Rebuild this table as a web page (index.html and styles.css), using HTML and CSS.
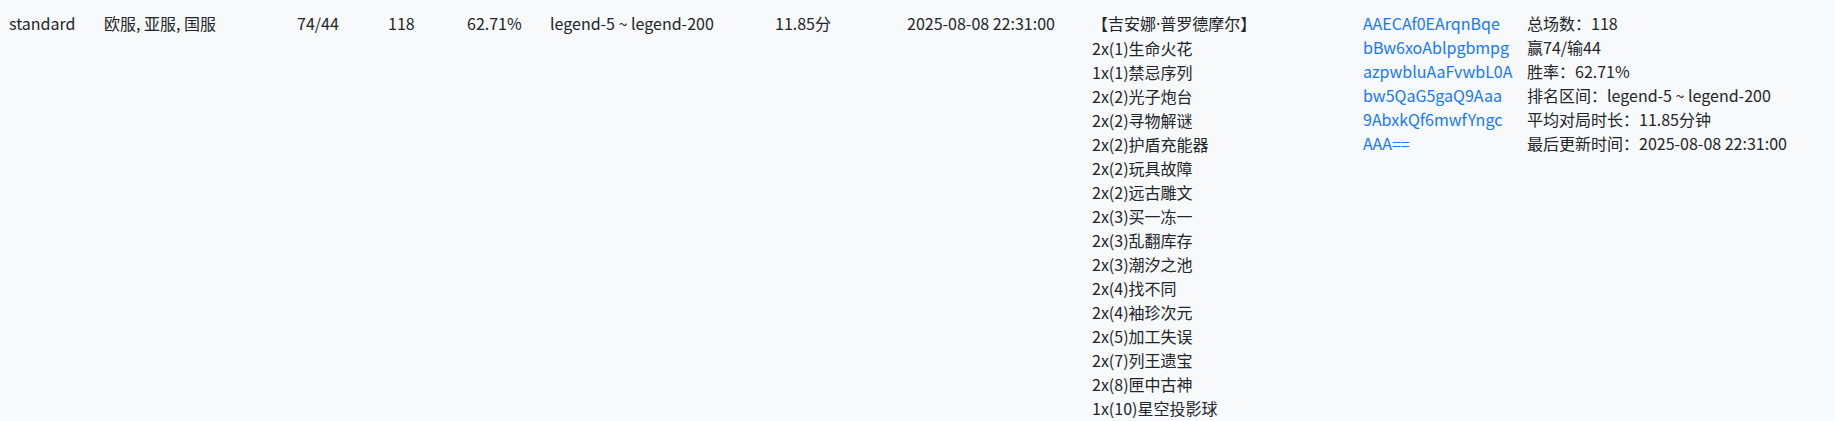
FILE: index.html
```html
<!DOCTYPE html>
<html lang="zh-CN">
<head>
<meta charset="utf-8">
<title>卡组数据</title>
<link rel="stylesheet" href="styles.css">
</head>
<body>
<div class="table">
  <div class="row">
    <div class="cell c-mode">standard</div>
    <div class="cell c-region">欧服, 亚服, 国服</div>
    <div class="cell c-wl">74/44</div>
    <div class="cell c-total">118</div>
    <div class="cell c-rate">62.71%</div>
    <div class="cell c-rank">legend-5 ~ legend-200</div>
    <div class="cell c-dur">11.85分</div>
    <div class="cell c-time">2025-08-08 22:31:00</div>
    <div class="cell c-deck">
      <div class="deck-title">【吉安娜<span class="dot">·</span>普罗德摩尔】</div>
      <div>2x(1)生命火花</div>
      <div>1x(1)禁忌序列</div>
      <div>2x(2)光子炮台</div>
      <div>2x(2)寻物解谜</div>
      <div>2x(2)护盾充能器</div>
      <div>2x(2)玩具故障</div>
      <div>2x(2)远古雕文</div>
      <div>2x(3)买一冻一</div>
      <div>2x(3)乱翻库存</div>
      <div>2x(3)潮汐之池</div>
      <div>2x(4)找不同</div>
      <div>2x(4)袖珍次元</div>
      <div>2x(5)加工失误</div>
      <div>2x(7)列王遗宝</div>
      <div>2x(8)匣中古神</div>
      <div>1x(10)星空投影球</div>
    </div>
    <div class="cell c-code">
      <a class="code" href="#">AAECAf0EArqnBqe<br>bBw6xoAblpgbmpg<br>azpwbluAaFvwbL0A<br>bw5QaG5gaQ9Aaa<br>9AbxkQf6mwfYngc<br>AAA==</a>
    </div>
    <div class="cell c-stats">
      <div>总场数：118</div>
      <div>赢74/输44</div>
      <div>胜率：62.71%</div>
      <div>排名区间：legend-5 ~ legend-200</div>
      <div>平均对局时长：11.85分钟</div>
      <div>最后更新时间：2025-08-08 22:31:00</div>
    </div>
  </div>
</div>
</body>
</html>
```
FILE: styles.css
```css
html, body {
  margin: 0;
  padding: 0;
  background: #f8f9fb;
}
body {
  font-family: "Noto Sans CJK SC", "Noto Sans", sans-serif;
  font-size: 16px;
  line-height: 24px;
  color: #212529;
}
.table {
  padding: 11px 0 0 9px;
}
.row {
  display: flex;
  align-items: flex-start;
}
.cell {
  flex: none;
  white-space: nowrap;
}
.c-mode { width: 95px; }
.c-region { width: 193px; }
.c-wl { width: 91px; }
.c-total { width: 79px; }
.c-rate { width: 83px; }
.c-rank { width: 225px; }
.c-dur { width: 132px; }
.c-time { width: 185px; }
.c-deck { width: 271px; }
.c-code { width: 164px; }
.c-stats { flex: 1; }
.dot {
  font-family: "Noto Sans", sans-serif;
}
.code {
  color: #1677ff;
  text-decoration: none;
}
```
